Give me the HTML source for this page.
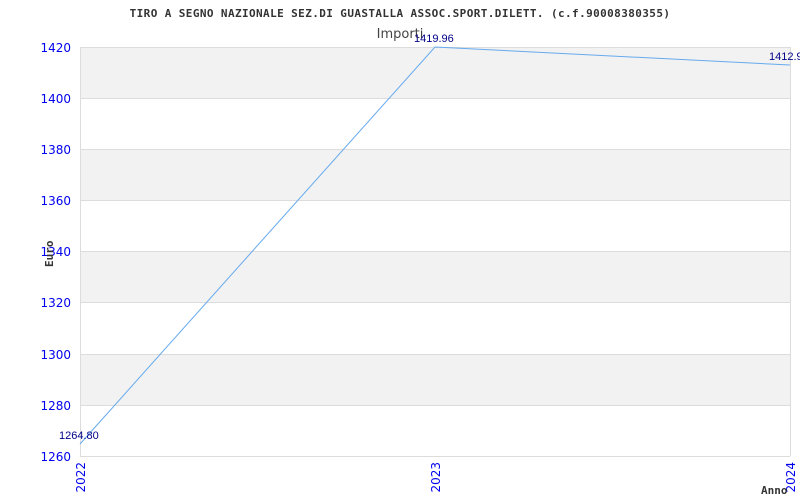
<!DOCTYPE html>
<html><head><meta charset="utf-8"><style>
html,body{margin:0;padding:0;background:#fff;}
svg{display:block;}
</style></head><body>
<svg width="800" height="500" xmlns="http://www.w3.org/2000/svg">
<rect width="800" height="500" fill="#fff"/>
<g fill="#f2f2f2">
<rect x="80" y="47" width="710" height="51"/>
<rect x="80" y="149" width="710" height="51"/>
<rect x="80" y="251" width="710" height="51"/>
<rect x="80" y="354" width="710" height="51"/>
</g>
<g stroke="#dcdcdc" stroke-width="1">
<line x1="80" y1="47.5" x2="790" y2="47.5"/>
<line x1="80" y1="98.5" x2="790" y2="98.5"/>
<line x1="80" y1="149.5" x2="790" y2="149.5"/>
<line x1="80" y1="200.5" x2="790" y2="200.5"/>
<line x1="80" y1="251.5" x2="790" y2="251.5"/>
<line x1="80" y1="302.5" x2="790" y2="302.5"/>
<line x1="80" y1="354.5" x2="790" y2="354.5"/>
<line x1="80" y1="405.5" x2="790" y2="405.5"/>
<line x1="80" y1="456.5" x2="790" y2="456.5"/>
<line x1="80.5" y1="47" x2="80.5" y2="456"/>
<line x1="790.5" y1="47" x2="790.5" y2="456"/>
</g>
<polyline points="80,444 435,47 790,65" fill="none" stroke="#66aaee" stroke-width="1"/>
<g font-family="DejaVu Sans Mono, Liberation Mono, monospace" font-weight="bold" font-size="11" fill="#333">
<text x="400" y="17" text-anchor="middle" letter-spacing="0.4">TIRO A SEGNO NAZIONALE SEZ.DI GUASTALLA ASSOC.SPORT.DILETT. (c.f.90008380355)</text>
</g>
<text x="400" y="38" text-anchor="middle" font-family="DejaVu Sans, Liberation Sans, sans-serif" font-size="13" fill="#444">Importi</text>
<g font-family="DejaVu Sans, Liberation Sans, sans-serif" font-size="12" fill="#0000ee" text-anchor="end">
<text x="71" y="52">1420</text>
<text x="71" y="103">1400</text>
<text x="71" y="154">1380</text>
<text x="71" y="205">1360</text>
<text x="71" y="256">1340</text>
<text x="71" y="307">1320</text>
<text x="71" y="359">1300</text>
<text x="71" y="410">1280</text>
<text x="71" y="461">1260</text>
</g>
<g font-family="DejaVu Sans, Liberation Sans, sans-serif" font-size="12" fill="#0000ee" text-anchor="end">
<text transform="translate(85,462) rotate(-90)">2022</text>
<text transform="translate(440,462) rotate(-90)">2023</text>
<text transform="translate(795,462) rotate(-90)">2024</text>
</g>
<g font-family="Liberation Sans, sans-serif" font-size="11" fill="#000088">
<text x="59" y="439">1264.80</text>
<text x="414" y="42">1419.96</text>
<text x="769" y="60">1412.96</text>
</g>
<text transform="translate(53,267) rotate(-90)" font-family="DejaVu Sans Mono, monospace" font-weight="bold" font-size="11" fill="#333">Euro</text>
<text x="761" y="494" font-family="DejaVu Sans Mono, monospace" font-weight="bold" font-size="11" fill="#333">Anno</text>
</svg>
</body></html>
